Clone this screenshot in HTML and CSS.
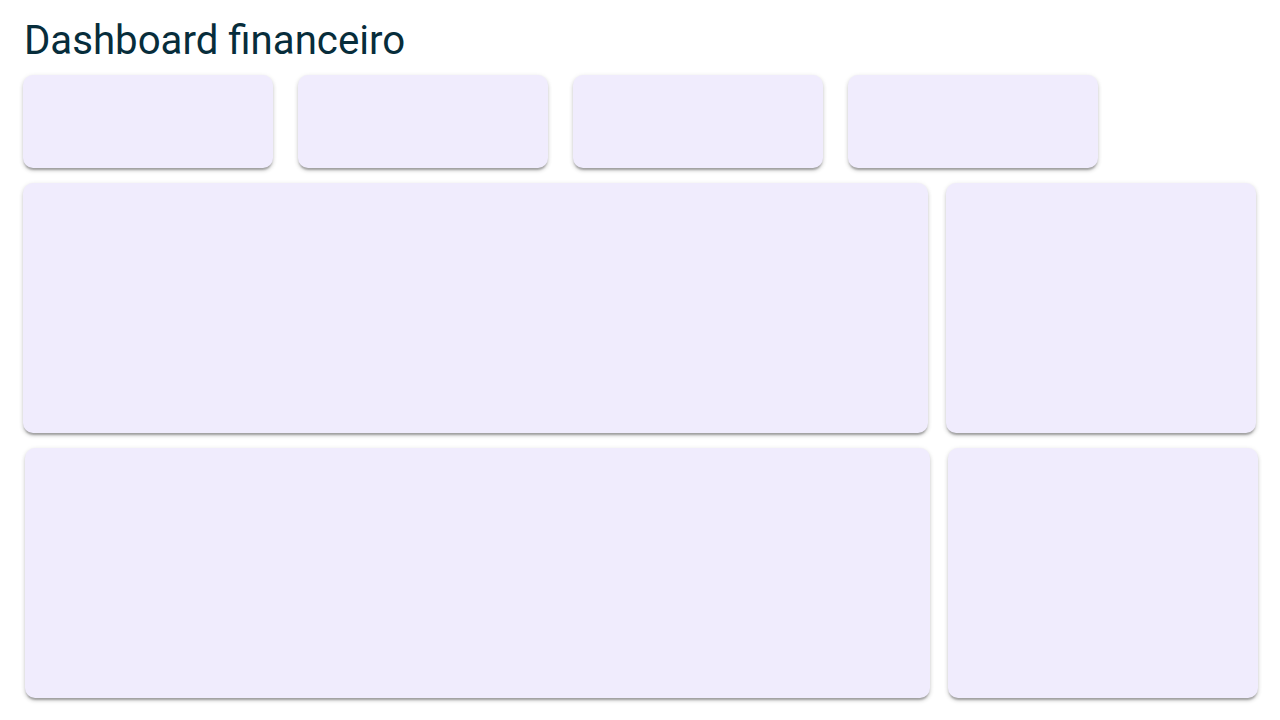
FILE: index.html
```html
<!DOCTYPE html>
<html lang="pt">
<head>
<meta charset="utf-8">
<title>Dashboard financeiro</title>
<link rel="stylesheet" href="styles.css">
</head>
<body>
<main class="page">
  <h1 class="title">Dashboard financeiro</h1>
  <section class="stats">
    <div class="card stat"></div>
    <div class="card stat"></div>
    <div class="card stat"></div>
    <div class="card stat"></div>
  </section>
  <section class="row">
    <div class="card wide"></div>
    <div class="card side"></div>
  </section>
  <section class="row row-shift">
    <div class="card wide"></div>
    <div class="card side"></div>
  </section>
</main>
</body>
</html>
```

FILE: styles.css
```css
html, body {
  margin: 0;
  padding: 0;
  background: #ffffff;
}

.page {
  padding: 17px 22px 0 23px;
  font-family: Roboto, "Liberation Sans", sans-serif;
}

.title {
  margin: 0 0 11px 1px;
  font-size: 40.2px;
  font-weight: 400;
  line-height: 47px;
  color: #072d3b;
}

.card {
  flex-shrink: 0;
  background: #f0ecfd;
  border-radius: 10px;
  box-shadow: 0 3px 2px -1px rgba(0, 0, 0, 0.25),
              0 3px 4px 0 rgba(0, 0, 0, 0.12),
              0 1px 5px 0 rgba(0, 0, 0, 0.1);
}

.stats {
  display: flex;
  gap: 25px;
  margin-bottom: 15px;
}

.stat {
  width: 250px;
  height: 93px;
}

.row {
  display: flex;
  gap: 18px;
  margin-bottom: 15px;
}

.row-shift {
  margin-left: 2px;
}

.wide {
  width: 905px;
  height: 250px;
}

.side {
  width: 310px;
  height: 250px;
}
```
